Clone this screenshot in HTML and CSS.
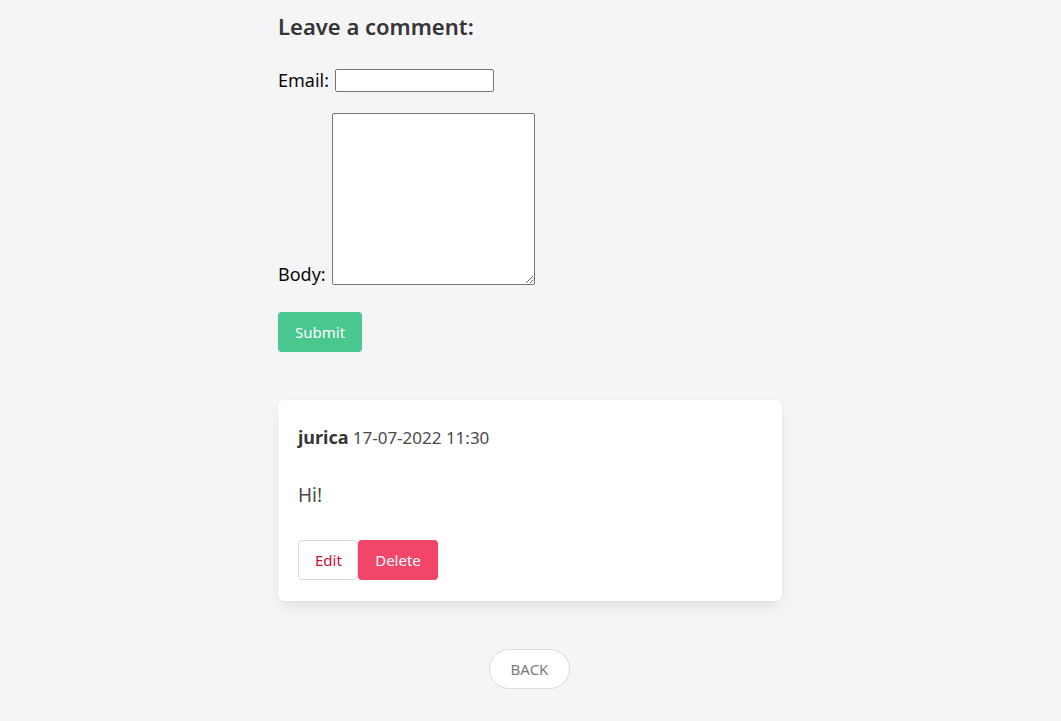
FILE: index.html
```html
<!DOCTYPE html>
<html lang="en">
<head>
<meta charset="utf-8">
<title>Post</title>
<link rel="stylesheet" href="styles.css">
</head>
<body>
<main class="page">
  <section class="content">
    <h2 class="title">Leave a comment:</h2>
    <form class="comment-form">
      <div class="field field-email">
        <label class="label" for="email">Email:</label>
        <input class="input" id="email" type="text">
      </div>
      <div class="field field-body">
        <label class="label" for="body">Body:</label>
        <textarea class="textarea" id="body"></textarea>
      </div>
      <button class="btn btn-submit" type="button">Submit</button>
    </form>

    <article class="card">
      <div class="card-head">
        <strong class="author">jurica</strong>
        <span class="date">17-07-2022 11:30</span>
      </div>
      <p class="card-body">Hi!</p>
      <div class="card-actions">
        <button class="btn btn-edit" type="button">Edit</button>
        <button class="btn btn-delete" type="button">Delete</button>
      </div>
    </article>

    <div class="back-row">
      <button class="btn btn-back" type="button">BACK</button>
    </div>
  </section>
</main>
</body>
</html>
```

FILE: styles.css
```css
* { box-sizing: border-box; }

html, body {
  margin: 0;
  padding: 0;
  background: #f5f5f7;
  font-family: "Noto Sans", "Open Sans", sans-serif;
  color: #4a4a4a;
}

.page {
  padding-top: 11px;
}

.content {
  width: 505px;
  margin: 0 auto;
}

.title {
  margin: 0;
  font-size: 22px;
  font-weight: 600;
  line-height: 30px;
  color: #363636;
}

.comment-form {
  margin-top: 27px;
}

.field {
  display: flex;
  gap: 6px;
  color: #0a0a0a;
  font-size: 18px;
}

.field-email {
  align-items: center;
  height: 24px;
}

.field-body {
  margin-top: 21px;
  align-items: flex-end;
}

.label {
  line-height: 22px;
}

.input {
  width: 159px;
  height: 23px;
  border: 1px solid #767676;
  border-radius: 2px;
  background: #fff;
}

.textarea {
  width: 203px;
  height: 172px;
  border: 1px solid #767676;
  border-radius: 2px;
  background: #fff;
  resize: both;
  display: block;
}

.btn {
  font-family: inherit;
  font-size: 15px;
  height: 40px;
  border-radius: 4px;
  border: 1px solid transparent;
  padding: 0 16px;
  cursor: pointer;
}

.btn-submit {
  margin-top: 27px;
  width: 84px;
  background: #48c78e;
  color: #fff;
}

.card {
  width: 504px;
  margin-top: 48px;
  background: #fff;
  border-radius: 6px;
  box-shadow: 0 8px 16px -4px rgba(10, 10, 10, 0.1), 0 0 0 1px rgba(10, 10, 10, 0.02);
  padding: 20px 20px 21px;
}

.card-head {
  line-height: 34px;
}

.author {
  font-size: 18px;
  font-weight: 700;
  color: #363636;
}

.date {
  font-size: 17px;
  color: #4a4a4a;
}

.card-body {
  margin: 26px 0 0;
  font-size: 19px;
  line-height: 28px;
  color: #4a4a4a;
}

.card-actions {
  margin-top: 31px;
  display: flex;
}

.btn-edit {
  width: 60px;
  background: #fff;
  border-color: #dbdbdb;
  color: #cc0f35;
}

.btn-delete {
  width: 80px;
  background: #f14668;
  color: #fff;
}

.back-row {
  width: 503px;
  margin-top: 48px;
  display: flex;
  justify-content: center;
}

.btn-back {
  width: 81px;
  border-radius: 20px;
  background: #fff;
  border-color: #dbdbdb;
  color: #7a7a7a;
  padding: 0;
}
```
